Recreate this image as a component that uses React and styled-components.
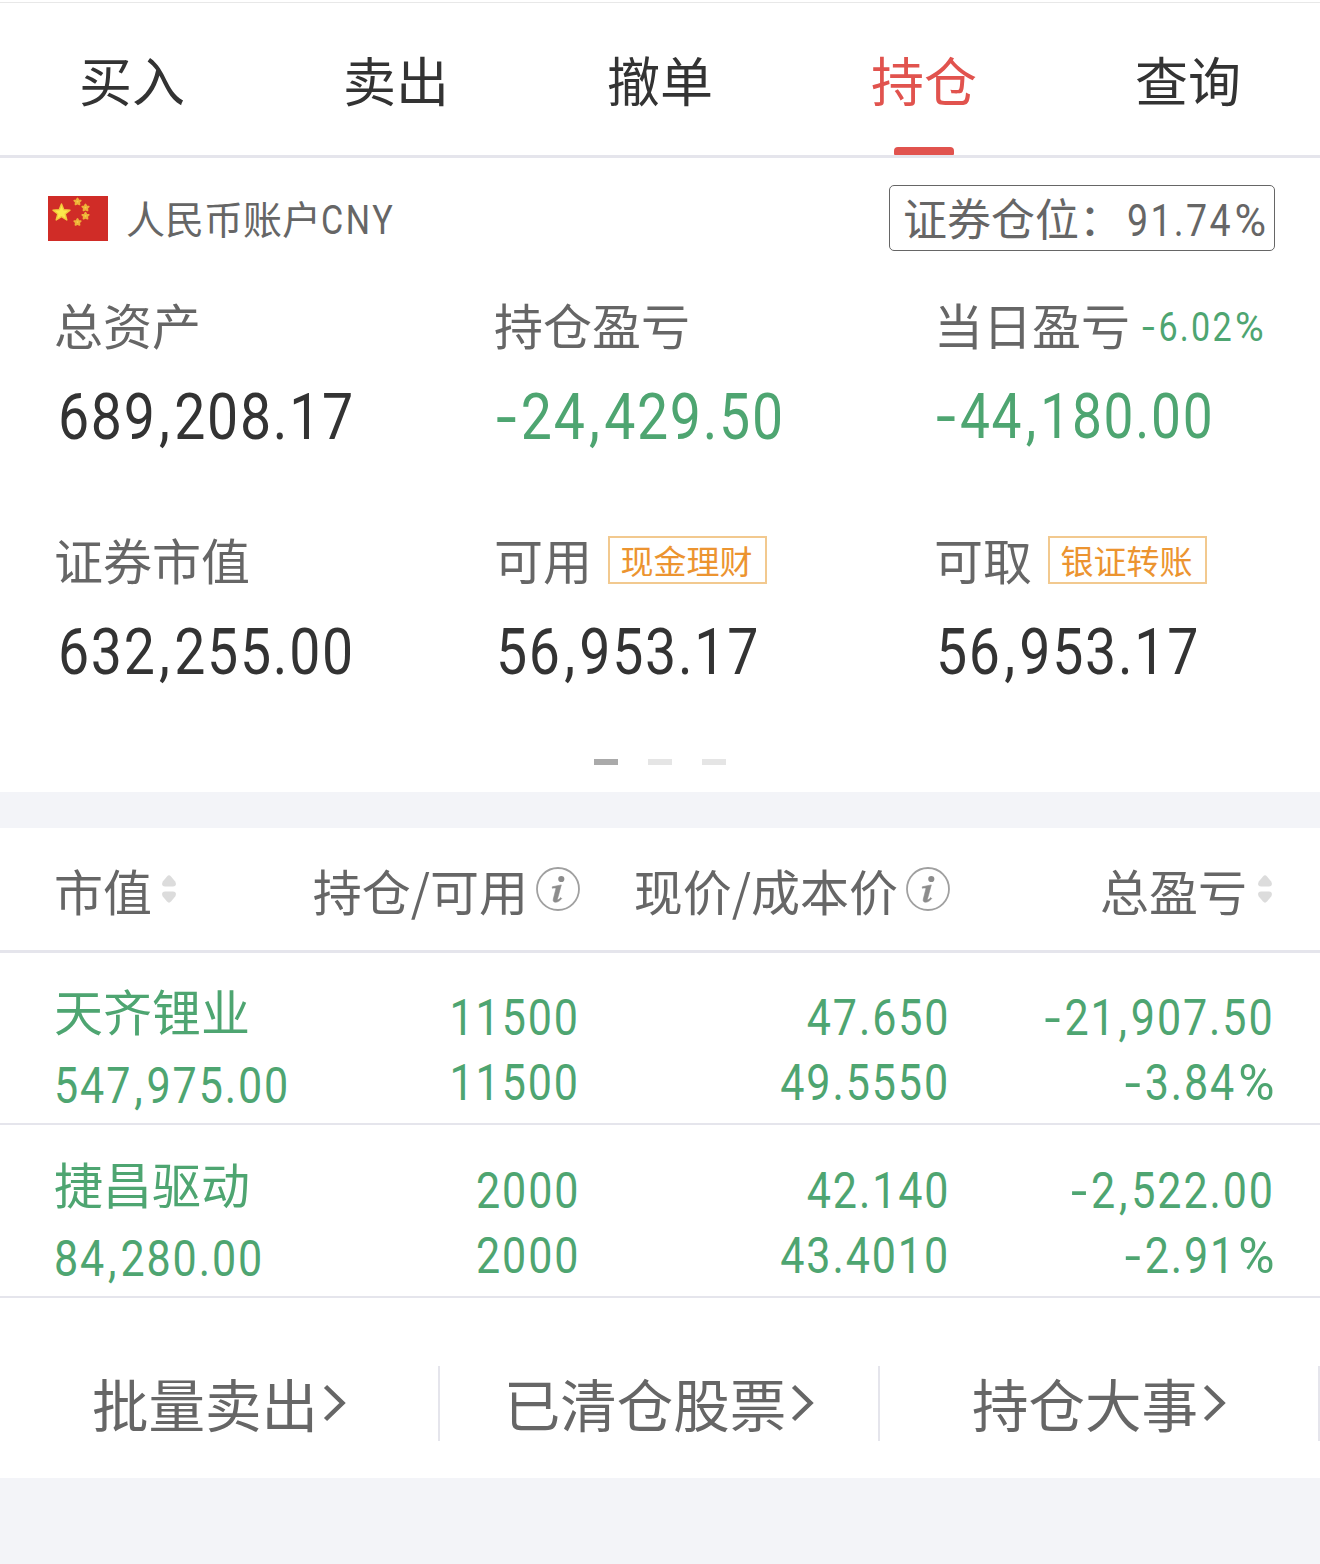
import React from 'react';
import styled, { createGlobalStyle } from 'styled-components';

const colors = {
    text: '#333333',
    muted: '#666666',
    red: '#e1534e',
    green: '#4ea571',
    orange: '#ec9430',
    line: '#e5e5ec',
    band: '#f3f4f8',
};

const GlobalStyle = createGlobalStyle`
    * {
        box-sizing: border-box;
    }

    body {
        margin: 0;
        background: ${colors.band};
        color: ${colors.text};
        font-family: "Noto Sans CJK SC", sans-serif;
    }
`;

const Page = styled.div`
    width: 1320px;
    height: 1564px;
    overflow: hidden;
    background: ${colors.band};
`;

const Header = styled.header`
    display: flow-root;
    background: #fff;
`;

const Tabs = styled.nav`
    display: flex;
    height: 156px;
    margin-top: 2px;
    border-top: 1px solid #e8e8e8;
    border-bottom: 3px solid ${colors.line};
`;

const Tab = styled.div`
    display: flex;
    flex-direction: column;
    justify-content: space-between;
    align-items: center;
    flex: 1;
    padding-top: 36px;
    color: ${props => (props.$active ? colors.red : colors.text)};
    font-size: 53px;
    line-height: 80px;

    &:after {
        content: '';
        width: 60px;
        height: 8px;
        border-radius: 4px 4px 1px 1px;
        background: ${props => (props.$active ? colors.red : 'transparent')};
    }
`;

const Summary = styled.section`
    height: 634px;
    padding-top: 27px;
    background: #fff;
`;

const AccountRow = styled.div`
    display: flex;
    align-items: center;
    height: 66px;
    padding: 0 45px 0 48px;
    color: ${colors.muted};
`;

const FlagIcon = styled.svg`
    width: 60px;
    height: 45px;
    margin-right: 18px;
`;

const AccountName = styled.div`
    display: flex;
    align-items: baseline;
    flex: 1;
    padding-top: 2px;
    font-size: 39px;
    line-height: 66px;
`;

const PositionBadge = styled.div`
    display: flex;
    align-items: baseline;
    justify-content: space-between;
    width: 386px;
    height: 66px;
    padding: 0 11px 0 13px;
    border: 1px solid ${colors.muted};
    border-radius: 5px;
    font-size: 44px;
    line-height: 63px;
    white-space: nowrap;
`;

const PositionLabel = styled.span`
    width: 200px;
`;

/* condensed figures: Roboto squeezed horizontally from the aligned edge */
const Figure = styled.span`
    display: inline-block;
    font-family: Roboto, sans-serif;
    font-size: ${props => props.$size}px;
    letter-spacing: ${props => props.$spacing}px;
    white-space: nowrap;
    transform: scaleX(0.853);
    transform-origin: ${props => (props.$right ? 'right' : 'left')} center;
`;

const Comma = styled.span`
    padding: 0 0.045em;
`;

const Minus = styled.span`
    display: inline-block;
    margin-right: 0.14em;
    transform: scaleX(1.35);
    transform-origin: left center;
`;

const Percent = styled.span`
    display: inline-block;
    margin: 0 0.12em 0 0.04em;
    letter-spacing: 0;
    transform: scaleX(1.15);
    transform-origin: left center;
`;

const Metrics = styled.div`
    display: grid;
    grid-template-columns: repeat(3, 440px);
    grid-template-rows: 235px 235px;
    padding-top: 38px;
`;

const Metric = styled.div`
    padding-left: 54px;
`;

const MetricLabel = styled.div`
    display: flex;
    align-items: center;
    height: 70px;
    color: ${colors.muted};
    font-size: 49px;
    line-height: 68px;
    white-space: nowrap;
`;

const MetricValue = styled.div`
    height: 80px;
    margin-top: 18px;
    padding-left: ${props => (props.$shift ? 4 : 2)}px;
    color: ${props => (props.$down ? colors.green : colors.text)};
    line-height: 80px;
`;

const Change = styled.span`
    width: 130px;
    margin-left: 12px;
    color: ${colors.green};
`;

const Tag = styled.span`
    width: 159px;
    height: 48px;
    margin: 2px 0 0 16px;
    padding-right: 2px;
    border: 2px solid #f2c98f;
    color: ${colors.orange};
    font-size: 33px;
    line-height: 44px;
    text-align: center;
`;

const Pager = styled.div`
    display: flex;
    justify-content: center;
    gap: 30px;
`;

const PagerDash = styled.span`
    width: 24px;
    height: 6px;
    background: ${props => (props.$active ? '#aaaaaa' : '#e5e5e5')};
`;

const Holdings = styled.section`
    margin-top: 36px;
    background: #fff;
`;

const HoldingsGrid = styled.div`
    display: grid;
    grid-template-columns: 246px 280px 370px 325px;
    padding: 0 45px 0 54px;
`;

const HoldingsHead = styled(HoldingsGrid)`
    height: 125px;
    border-bottom: 3px solid ${colors.line};
    color: ${colors.muted};
    font-size: 49px;
`;

const HeadCell = styled.div`
    display: flex;
    align-items: center;
    justify-content: ${props => (props.$left ? 'flex-start' : 'flex-end')};
    height: 122px;
    white-space: nowrap;
`;

const InfoIcon = styled.svg`
    flex: none;
    width: 44px;
    height: 44px;
    margin-left: 8px;
`;

const SortIcon = styled.svg`
    flex: none;
    width: 16px;
    height: 28px;
    margin-left: ${props => props.$gap}px;
    margin-right: ${props => props.$end || 0}px;
`;

const HoldingsRow = styled(HoldingsGrid)`
    height: ${props => props.$height}px;
    padding-top: ${props => props.$height - 172}px;
    border-bottom: 2px solid ${colors.line};
    color: ${colors.green};
`;

const NameCell = styled.div`
    padding-top: 24px;
    line-height: 65px;
`;

const StockName = styled.div`
    height: 76px;
    font-size: 49px;
`;

const NumberCell = styled.div`
    display: flex;
    flex-direction: column;
    align-items: flex-end;
    padding-top: 32px;
    line-height: 65px;
`;

const Actions = styled.footer`
    display: grid;
    grid-template-columns: repeat(3, 440px);
    height: 180px;
    padding-top: 68px;
    background: #fff;
`;

const Action = styled.div`
    display: flex;
    align-items: center;
    justify-content: center;
    height: 75px;
    border-right: 2px solid ${colors.line};
    color: ${colors.muted};
    font-size: 56.5px;
    line-height: 73px;
`;

const ActionText = styled.span`
    padding-bottom: 2px;
`;

const ChevronIcon = styled.svg`
    width: 24px;
    height: 40px;
    margin: 0 0 2px 4px;
`;

const marks = {
    ',': Comma,
    '-': Minus,
    '%': Percent,
};

const Num = ({ size, spacing, right, children }) => (
    <Figure $size={size} $spacing={spacing} $right={right}>
        {children.split(/([,%-])/).map((part, i) => {
            const Mark = marks[part];
            return Mark ? <Mark key={i}>{part}</Mark> : part;
        })}
    </Figure>
);

const SmallStar = ({ x, y }) => (
    <path
        transform={`translate(${x} ${y})`}
        d="M0-3l1 1.900 2.200.3-1.600 1.500.4 2.200-2-1-2 1 .4-2.200-1.600-1.500 2.200-.3z"
    />
);

const Flag = () => (
    <FlagIcon viewBox="0 0 60 45">
        <rect width="60" height="45" fill="#d02c27" />
        <path
            d="M13.500 8l2.300 5.700 6.200.4-4.800 3.900 1.600 6-5.300-3.300-5.300 3.300 1.600-6L5 14.100l6.200-.4z"
            fill="#fbe94b"
            stroke="#f3c93c"
            strokeWidth="1.400"
            strokeLinejoin="round"
        />
        <g fill="#f5d04a" stroke="#eeb038" strokeWidth="1.800" strokeLinejoin="round">
            <SmallStar x={29.500} y={5.500} />
            <SmallStar x={37.500} y={11.500} />
            <SmallStar x={37.500} y={19.700} />
            <SmallStar x={29.500} y={26} />
        </g>
    </FlagIcon>
);

const Info = () => (
    <InfoIcon viewBox="0 0 44 44">
        <circle cx="22" cy="22" r="21" fill="none" stroke="#a0a0a0" strokeWidth="1.800" />
        <circle cx="25.300" cy="12" r="3.100" fill="#8c8c8c" />
        <path
            d="M16.300 19.800l9-1.900-3.700 13.600c-.5 1.800.7 1.700 3.200-.9l.9 1c-3.300 4.400-9.500 5.100-8.400.4l2.500-9.800c.4-1.500-.8-1.500-3.500-1z"
            fill="#8c8c8c"
            stroke="#8c8c8c"
            strokeWidth="0.600"
        />
    </InfoIcon>
);

const Sort = ({ gap, end }) => (
    <SortIcon $gap={gap} $end={end} viewBox="0 0 16 28" fill="#dcdcdc">
        <path d="M6 1.400Q8-.8 10 1.400L14.200 6.500Q16.400 11 12 11.600H4Q-.4 11 1.800 6.500z" />
        <path d="M6 26.600Q8 28.800 10 26.600L14.200 21.500Q16.400 17 12 16.400H4Q-.4 17 1.800 21.500z" />
    </SortIcon>
);

const Chevron = () => (
    <ChevronIcon viewBox="0 0 24 40" fill="none">
        <path d="M3.500 3.500L20.500 20 3.500 36.500" stroke={colors.muted} strokeWidth="4.500" />
    </ChevronIcon>
);

const tabs = ['买入', '卖出', '撤单', '持仓', '查询'];

const metrics = [
    { label: '总资产', value: '689,208.17', shift: true },
    { label: '持仓盈亏', value: '-24,429.50', down: true },
    { label: '当日盈亏', value: '-44,180.00', down: true, change: '-6.02%', size: 62.5 },
    { label: '证券市值', value: '632,255.00', shift: true },
    { label: '可用', value: '56,953.17', tag: '现金理财' },
    { label: '可取', value: '56,953.17', tag: '银证转账' },
];

const holdings = [
    {
        name: '天齐锂业',
        value: '547,975.00',
        cells: [['11500', '11500'], ['47.650', '49.5550'], ['-21,907.50', '-3.84%']],
        height: 172,
    },
    {
        name: '捷昌驱动',
        value: '84,280.00',
        cells: [['2000', '2000'], ['42.140', '43.4010'], ['-2,522.00', '-2.91%']],
        height: 173,
    },
];

const actions = ['批量卖出', '已清仓股票', '持仓大事'];

export default class App extends React.Component {
    constructor(props) {
        super(props);

        this.state = {
            activeTab: '持仓',
        };
    }

    render() {
        return (
            <Page>
                <GlobalStyle />
                <Header>
                    <Tabs>
                        {tabs.map(tab => (
                            <Tab
                                key={tab}
                                $active={tab === this.state.activeTab}
                                onClick={() => this.setState({ activeTab: tab })}
                            >
                                {tab}
                            </Tab>
                        ))}
                    </Tabs>
                </Header>
                <Summary>
                    <AccountRow>
                        <Flag />
                        <AccountName>
                            人民币账户<Num size={40} spacing={3}>CNY</Num>
                        </AccountName>
                        <PositionBadge>
                            <PositionLabel>证券仓位：</PositionLabel>
                            <Num size={44} spacing={2.7} right>91.74%</Num>
                        </PositionBadge>
                    </AccountRow>
                    <Metrics>
                        {metrics.map(metric => (
                            <Metric key={metric.label}>
                                <MetricLabel>
                                    {metric.label}
                                    {metric.change && (
                                        <Change>
                                            <Num size={40} spacing={2.6}>{metric.change}</Num>
                                        </Change>
                                    )}
                                    {metric.tag && <Tag>{metric.tag}</Tag>}
                                </MetricLabel>
                                <MetricValue $down={metric.down} $shift={metric.shift}>
                                    <Num size={metric.size || 65} spacing={2}>
                                        {metric.value}
                                    </Num>
                                </MetricValue>
                            </Metric>
                        ))}
                    </Metrics>
                    <Pager>
                        <PagerDash $active />
                        <PagerDash />
                        <PagerDash />
                    </Pager>
                </Summary>
                <Holdings>
                    <HoldingsHead>
                        <HeadCell $left>市值<Sort gap={9} /></HeadCell>
                        <HeadCell>持仓/可用<Info /></HeadCell>
                        <HeadCell>现价/成本价<Info /></HeadCell>
                        <HeadCell>总盈亏<Sort gap={10} end={2} /></HeadCell>
                    </HoldingsHead>
                    {holdings.map(row => (
                        <HoldingsRow key={row.name} $height={row.height}>
                            <NameCell>
                                <StockName>{row.name}</StockName>
                                <Num size={50.5} spacing={2.2}>{row.value}</Num>
                            </NameCell>
                            {row.cells.map(([first, second], i) => (
                                <NumberCell key={i}>
                                    <Num size={50.5} spacing={2.2} right>{first}</Num>
                                    <Num size={50.5} spacing={2.2} right>{second}</Num>
                                </NumberCell>
                            ))}
                        </HoldingsRow>
                    ))}
                </Holdings>
                <Actions>
                    {actions.map(action => (
                        <Action key={action}>
                            <ActionText>{action}</ActionText>
                            <Chevron />
                        </Action>
                    ))}
                </Actions>
            </Page>
        );
    }
}
